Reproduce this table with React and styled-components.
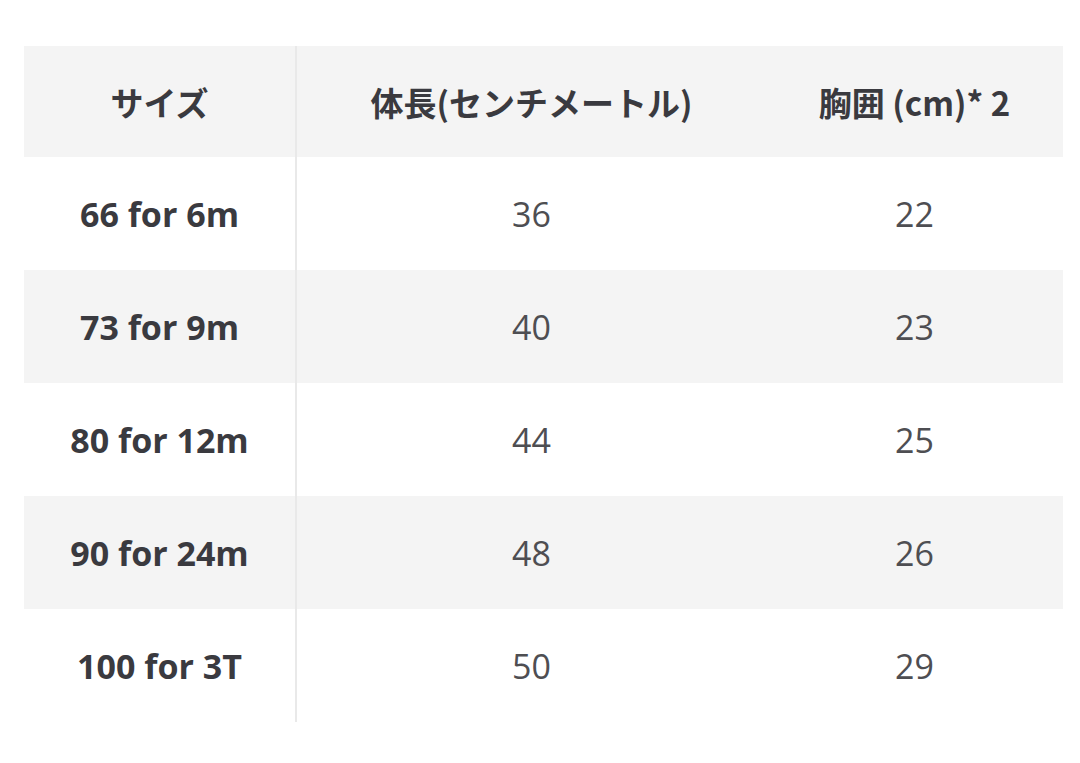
import React from 'react';
import styled, { createGlobalStyle } from 'styled-components';

const GlobalStyle = createGlobalStyle`
  body {
    margin: 0;
    background: #ffffff;
    font-family: "Open Sans", "Noto Sans CJK JP", sans-serif;
  }
`;

const Page = styled.div`
  width: 1080px;
  height: 763px;
  padding: 46px 17px 0 24px;
  box-sizing: border-box;
`;

const Table = styled.table`
  width: 1039px;
  border-collapse: collapse;
  table-layout: fixed;
`;

const Row = styled.tr`
  height: ${(p) => (p.head ? 111 : 113)}px;
  background: ${(p) => (p.shade ? '#f4f4f4' : '#ffffff')};
`;

const Cell = styled.td`
  padding: 0;
  text-align: center;
  vertical-align: middle;
  font-size: ${(p) => (p.head ? 33 : 34)}px;
  font-weight: ${(p) => (p.bold ? 700 : 400)};
  color: ${(p) => (p.bold ? '#3a3a3f' : '#4e4e52')};
  font-family: ${(p) =>
    p.head ? '"Noto Sans CJK JP", sans-serif' : '"Open Sans", "Noto Sans CJK JP", sans-serif'};
  border-right: ${(p) => (p.divider ? '2px solid #e9e9e9' : 'none')};
  white-space: nowrap;
`;

const rows = [
  ['66 for 6m', '36', '22'],
  ['73 for 9m', '40', '23'],
  ['80 for 12m', '44', '25'],
  ['90 for 24m', '48', '26'],
  ['100 for 3T', '50', '29'],
];

export default function App() {
  return (
    <>
      <GlobalStyle />
      <Page>
        <Table>
          <colgroup>
            <col style={{ width: 272 }} />
            <col style={{ width: 470 }} />
            <col style={{ width: 297 }} />
          </colgroup>
          <thead>
            <Row head shade>
              <Cell as="th" head bold divider>サイズ</Cell>
              <Cell as="th" head bold>体長(センチメートル)</Cell>
              <Cell as="th" head bold>胸囲 (cm)* 2</Cell>
            </Row>
          </thead>
          <tbody>
            {rows.map((r, i) => (
              <Row key={r[0]} shade={i % 2 === 1}>
                <Cell bold divider>{r[0]}</Cell>
                <Cell>{r[1]}</Cell>
                <Cell>{r[2]}</Cell>
              </Row>
            ))}
          </tbody>
        </Table>
      </Page>
    </>
  );
}
